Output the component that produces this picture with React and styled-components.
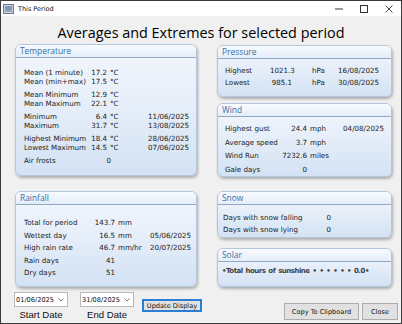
import React from "react";
import styled, { createGlobalStyle } from "styled-components";

const GlobalStyle = createGlobalStyle`
  html, body {
    margin: 0;
    padding: 0;
    background: #ffffff;
  }
  * { box-sizing: border-box; }
`;

// Window frame
const Window = styled.div`
  width: 402px;
  height: 324px;
  border: 1px solid #3c3c3c;
  background: #f0f0f0;
  display: flex;
  flex-direction: column;
  overflow: hidden;
`;

const TitleBar = styled.div`
  height: 15px;
  background: #ffffff;
  display: flex;
  align-items: center;
  padding-left: 2px;
  font-family: "DejaVu Sans", Verdana, sans-serif;
  font-size: 6.5px;
  color: #111;
`;

const TitleText = styled.span`
  margin-left: 4px;
  flex: 1;
`;

const WinButton = styled.div`
  width: 25px;
  height: 15px;
  display: flex;
  align-items: center;
  justify-content: center;
`;

const Heading = styled.h1`
  margin: 0;
  height: 28px;
  display: flex;
  align-items: center;
  justify-content: center;
  padding-top: 4px;
  font-family: "Open Sans", "Noto Sans", sans-serif;
  font-weight: 400;
  font-size: 14.4px;
  color: #000;
`;

const Columns = styled.div`
  display: grid;
  grid-template-columns: 182px 175px;
  column-gap: 20px;
  padding-left: 14px;
  align-items: start;
`;

const Column = styled.div`
  display: flex;
  flex-direction: column;
`;

// Panels
const Panel = styled.section`
  height: ${(p) => p.$h}px;
  margin-top: ${(p) => p.$mt || 0}px;
  border: 1px solid #b4c6dc;
  border-radius: 6px;
  background: linear-gradient(180deg, #f3f7fc 0%, #e6eef9 45%, #d3e2f4 100%);
  box-shadow: 1px 2px 3px rgba(0, 0, 0, 0.28);
  display: flex;
  flex-direction: column;
  overflow: hidden;
`;

const PanelHeader = styled.div`
  height: 13px;
  flex: none;
  padding-left: 4px;
  border-bottom: 1px solid #8fa9c9;
  background: linear-gradient(180deg, #f8fbff 0%, #e4edf8 100%);
  font-family: "Open Sans", "Noto Sans", sans-serif;
  font-size: 8.4px;
  line-height: 12px;
  color: #3a6ea6;
`;

const PanelBody = styled.div`
  padding: ${(p) => p.$pt}px 0 0 ${(p) => p.$pl}px;
  display: flex;
  flex-direction: column;
  gap: ${(p) => p.$gap || 0}px;
  font-family: "DejaVu Sans", Verdana, sans-serif;
  font-size: 7.1px;
  color: #1a1a1a;
`;

const Group = styled.div`
  display: flex;
  flex-direction: column;
`;

const Row = styled.div`
  display: grid;
  grid-template-columns: ${(p) => p.$cols};
  height: ${(p) => p.$lh}px;
  line-height: ${(p) => p.$lh}px;
  white-space: nowrap;
`;

const Cell = styled.span`
  text-align: ${(p) => p.$align || "left"};
  padding-left: ${(p) => p.$pl || 0}px;
`;

const SolarLine = styled.div`
  font-family: "DejaVu Sans", Verdana, sans-serif;
  font-size: 7px;
  font-weight: bold;
  letter-spacing: -0.5px;
  word-spacing: 1px;
  line-height: 10px;
  color: #222;
  opacity: 0.85;
`;

// Bottom bar
const BottomBar = styled.div`
  display: flex;
  align-items: flex-start;
  padding: 5px 3px 0 13px;
  height: 36px;
  margin-top: auto;
`;

const DateField = styled.div`
  display: flex;
  flex-direction: column;
  align-items: center;
  margin-right: ${(p) => p.$mr}px;
`;

const Picker = styled.div`
  width: 54px;
  height: 15px;
  background: #fff;
  border: 1px solid #b8b8b8;
  display: flex;
  align-items: center;
  justify-content: space-between;
  padding: 0 3px 0 1px;
  font-family: "DejaVu Sans", Verdana, sans-serif;
  font-size: 6.6px;
  color: #111;
`;

const DateLabel = styled.div`
  margin-top: 1px;
  font-family: "Liberation Sans", Arial, sans-serif;
  font-size: 9.6px;
  line-height: 13px;
  color: #111;
`;

const Button = styled.button`
  height: ${(p) => p.$h}px;
  width: ${(p) => p.$w}px;
  margin-top: ${(p) => p.$mt}px;
  margin-left: ${(p) => p.$ml || 0}px;
  padding: 0;
  background: #e1e1e1;
  border: 1px solid ${(p) => (p.$focus ? "#2a7fd4" : "#adadad")};
  box-shadow: ${(p) => (p.$focus ? "inset 0 0 0 1px #2a7fd4" : "none")};
  font-family: "DejaVu Sans", Verdana, sans-serif;
  font-size: 6.6px;
  color: #111;
`;

const Spacer = styled.div`
  flex: 1;
`;

const AppIcon = () => (
  <svg width="11" height="10" viewBox="0 0 11 10">
    <rect x="0.5" y="0.5" width="10" height="9" fill="#c9d3df" stroke="#6d7a88" />
    <rect x="2" y="2" width="7" height="4" fill="#7d98b8" />
    <rect x="2" y="6" width="7" height="2" fill="#9aa6b2" />
  </svg>
);

const Chevron = () => (
  <svg width="6" height="4" viewBox="0 0 6 4">
    <path d="M0.5 0.5 L3 3 L5.5 0.5" fill="none" stroke="#555" strokeWidth="0.8" />
  </svg>
);

const tempCols = "62px 21px 40px 42px";

const temperature = [
  [["Mean (1 minute)", "17.2", "°C", ""], ["Mean (min+max)", "17.5", "°C", ""]],
  [["Mean Minimum", "12.9", "°C", ""], ["Mean Maximum", "22.1", "°C", ""]],
  [["Minimum", "6.4", "°C", "11/06/2025"], ["Maximum", "31.7", "°C", "13/08/2025"]],
  [["Highest Minimum", "18.4", "°C", "28/06/2025"], ["Lowest Maximum", "14.5", "°C", "07/06/2025"]],
];

const rainfall = [
  ["Total for period", "143.7", "mm", ""],
  ["Wettest day", "16.5", "mm", "05/06/2025"],
  ["High rain rate", "46.7", "mm/hr", "20/07/2025"],
  ["Rain days", "41", "", ""],
  ["Dry days", "51", "", ""],
];

const wind = [
  ["Highest gust", "24.4", "mph", "04/08/2025"],
  ["Average speed", "3.7", "mph", ""],
  ["Wind Run", "7232.6", "miles", ""],
  ["Gale days", "0", "", ""],
];

const StatRow = ({ cols, lh, cells, unitPad = 3 }) => (
  <Row $cols={cols} $lh={lh}>
    <Cell>{cells[0]}</Cell>
    <Cell $align="right">{cells[1]}</Cell>
    <Cell $pl={unitPad}>{cells[2]}</Cell>
    <Cell $align="right">{cells[3]}</Cell>
  </Row>
);

export default function App() {
  return (
    <>
      <GlobalStyle />
      <Window>
        <TitleBar>
          <AppIcon />
          <TitleText>This Period</TitleText>
          <WinButton>
            <svg width="8" height="2" viewBox="0 0 8 2"><rect y="0.5" width="8" height="1" fill="#333" /></svg>
          </WinButton>
          <WinButton>
            <svg width="8" height="8" viewBox="0 0 8 8"><rect x="0.5" y="0.5" width="7" height="7" fill="none" stroke="#333" /></svg>
          </WinButton>
          <WinButton>
            <svg width="8" height="8" viewBox="0 0 8 8"><path d="M0.5 0.5 L7.5 7.5 M7.5 0.5 L0.5 7.5" stroke="#333" strokeWidth="0.9" /></svg>
          </WinButton>
        </TitleBar>

        <Heading>Averages and Extremes for selected period</Heading>

        <Columns>
          <Column>
            <Panel $h={132}>
              <PanelHeader>Temperature</PanelHeader>
              <PanelBody $pt={10} $pl={8} $gap={4}>
                {temperature.map((group, i) => (
                  <Group key={i}>
                    {group.map((r) => (
                      <StatRow key={r[0]} cols={tempCols} lh={9} cells={r} />
                    ))}
                  </Group>
                ))}
                <StatRow cols="74px 13px 40px 42px" lh={9} cells={["Air frosts", "0", "", ""]} />
              </PanelBody>
            </Panel>
            <Panel $h={96} $mt={15}>
              <PanelHeader>Rainfall</PanelHeader>
              <PanelBody $pt={12} $pl={8}>
                {rainfall.map((r) => (
                  <StatRow key={r[0]} cols="62px 29px 31px 45px" lh={12.5} cells={r} />
                ))}
              </PanelBody>
            </Panel>
          </Column>

          <Column>
            <Panel $h={52} $mt={1}>
              <PanelHeader>Pressure</PanelHeader>
              <PanelBody $pt={6} $pl={7}>
                <StatRow cols="45px 22px 40px 47px" lh={12} unitPad={20} cells={["Highest", "1021.3", "hPa", "16/08/2025"]} />
                <StatRow cols="45px 22px 40px 47px" lh={12} unitPad={20} cells={["Lowest", "985.1", "hPa", "30/08/2025"]} />
              </PanelBody>
            </Panel>
            <Panel $h={74} $mt={6}>
              <PanelHeader>Wind</PanelHeader>
              <PanelBody $pt={5} $pl={7}>
                {wind.map((r) => (
                  <StatRow key={r[0]} cols="52px 30px 31px 46px" lh={13.5} cells={r} />
                ))}
              </PanelBody>
            </Panel>
            <Panel $h={47} $mt={14}>
              <PanelHeader>Snow</PanelHeader>
              <PanelBody $pt={7} $pl={5}>
                <StatRow cols="100px 8px 0 0" lh={12} cells={["Days with snow falling", "0", "", ""]} />
                <StatRow cols="100px 8px 0 0" lh={12} cells={["Days with snow lying", "0", "", ""]} />
              </PanelBody>
            </Panel>
            <Panel $h={39} $mt={10}>
              <PanelHeader>Solar</PanelHeader>
              <PanelBody $pt={4} $pl={4}>
                <SolarLine>•Total hours of sunshine • • • • • • 0.0•</SolarLine>
              </PanelBody>
            </Panel>
          </Column>
        </Columns>

        <BottomBar>
          <DateField $mr={12}>
            <Picker>01/06/2025<Chevron /></Picker>
            <DateLabel>Start Date</DateLabel>
          </DateField>
          <DateField $mr={8}>
            <Picker>31/08/2025<Chevron /></Picker>
            <DateLabel>End Date</DateLabel>
          </DateField>
          <Button $w={60} $h={13} $mt={7} $focus>Update Display</Button>
          <Spacer />
          <Button $w={75} $h={17} $mt={11}>Copy To Clipboard</Button>
          <Button $w={36} $h={17} $mt={11} $ml={3}>Close</Button>
        </BottomBar>
      </Window>
    </>
  );
}
